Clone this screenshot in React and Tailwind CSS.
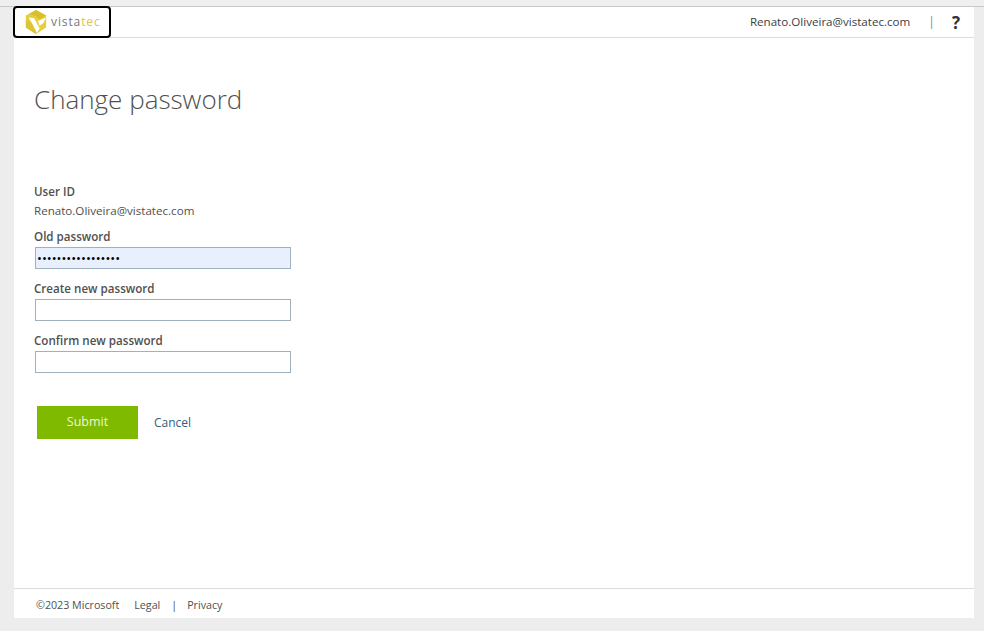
import React from "react";

function Logo() {
  return (
    <svg width="24" height="28" viewBox="0 0 26 28">
      <path d="M13 1 L24 7 L24 20 L13 27 L2 20 L2 7 Z" fill="#e6cf3c" />
      <path d="M13 1 L24 7 L17 11 L13 8 L6 5 Z" fill="#d9bf2b" />
      <path d="M2 20 L13 27 L13 21 L7 14 L2 12 Z" fill="#dcc433" />
      <path d="M5 9 L11 10 L17 21 L14 26 L9 16 Z" fill="#ffffff" />
      <path d="M15 13 L24 9 L21 15 L17 18 Z" fill="#ffffff" />
    </svg>
  );
}

function Field({ label, value, filled }) {
  return (
    <div className="flex flex-col">
      <label className="h-[20px] text-[11.6px] leading-[20px] font-semibold text-[#505050]">{label}</label>
      <input
        type="password"
        defaultValue={value}
        className={`ml-[1px] w-[256px] h-[22px] border border-[#9fb0bf] px-[1px] text-[13px] text-black outline-none ${filled ? "bg-[#e8f0fe]" : "bg-white"}`}
      />
    </div>
  );
}

export default function App() {
  return (
    <div className="h-[631px] w-[984px] overflow-hidden bg-[#ededed] font-['Open_Sans',sans-serif] flex flex-col">
      <div className="h-[7px] shrink-0 bg-[#efefef] border-b border-[#c8c8c8]" />
      <div className="ml-[14px] mr-[10px] mb-[13px] flex-1 flex flex-col bg-white">
        <header className="h-[31px] shrink-0 flex items-center justify-between border-b border-[#dcdcdc]">
          <div className="-ml-[1px] -mt-[1px] h-[32px] w-[98px] flex items-center gap-[3px] pl-[9px] bg-white border-2 border-black rounded-[4px]">
            <Logo />
            <span className="text-[12px] tracking-[0.9px] text-[#77787a]">
              vista<span className="text-[#d9c64a]">tec</span>
            </span>
          </div>
          <div className="flex items-center pr-[14px]">
            <span className="text-[11.6px] text-[#404040]">Renato.Oliveira@vistatec.com</span>
            <span className="ml-[18px] text-[12px] text-[#6f8a9c]">|</span>
            <span className="ml-[17px] text-[17px] leading-none font-bold text-[#303040]">?</span>
          </div>
        </header>

        <main className="flex-1 pl-[20px]">
          <h1 className="mt-[42px] text-[26px] leading-[38px] font-light text-[#505050]">Change password</h1>
          <div className="mt-[64px] text-[11.6px] leading-[20px] font-semibold text-[#505050]">User ID</div>
          <div className="mt-[-1px] mb-[6px] h-[20px] text-[11.6px] leading-[20px] text-[#505050]">Renato.Oliveira@vistatec.com</div>
          <div className="flex flex-col gap-[10px]">
            <Field label="Old password" value="•••••••••••••••••" filled />
            <Field label="Create new password" />
            <Field label="Confirm new password" />
          </div>
          <div className="mt-[33px] ml-[3px] flex items-center gap-[16px]">
            <button className="h-[33px] w-[101px] bg-[#7fba00] text-[12.5px] text-[#eef7d2]">Submit</button>
            <a className="text-[12px] text-[#2f6080]">Cancel</a>
          </div>
        </main>

        <footer className="h-[30px] shrink-0 flex items-center border-t border-[#dcdcdc] pt-[3px] pl-[22px] text-[10.7px] text-[#505050]">
          <span>©2023 Microsoft</span>
          <span className="ml-[15px]">Legal</span>
          <span className="ml-[11px]">|</span>
          <span className="ml-[10px]">Privacy</span>
        </footer>
      </div>
    </div>
  );
}
